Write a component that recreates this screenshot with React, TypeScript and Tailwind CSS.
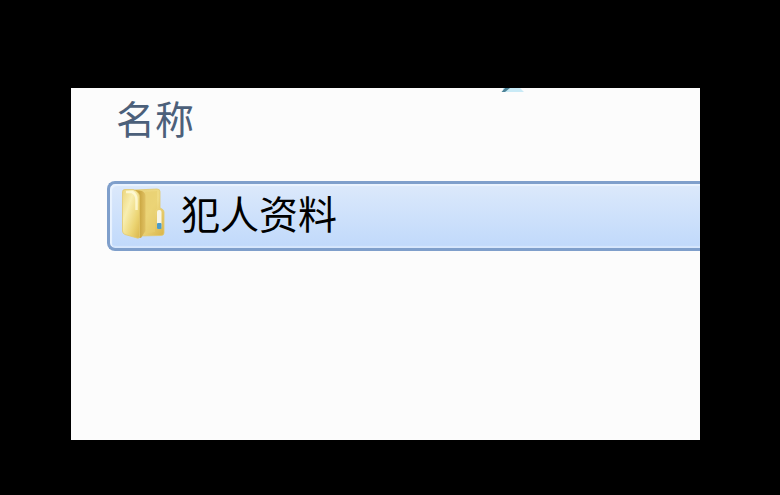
import React, { useState } from "react";

interface Folder {
  id: number;
  name: string;
}

const folders: Folder[] = [{ id: 1, name: "犯人资料" }];

const FolderIcon = () => (
  <svg className="h-14 w-11 shrink-0" viewBox="0 0 44 56" aria-hidden="true">
    <defs>
      <linearGradient id="cover" x1="0" y1="0" x2="1" y2="1">
        <stop offset="0" stopColor="#ecd57c" />
        <stop offset="0.35" stopColor="#f8eeb0" />
        <stop offset="0.7" stopColor="#ecd574" />
        <stop offset="1" stopColor="#dab64d" />
      </linearGradient>
      <linearGradient id="spine" x1="0" y1="0" x2="1" y2="0">
        <stop offset="0" stopColor="#d9b64f" />
        <stop offset="0.5" stopColor="#c9a540" />
        <stop offset="1" stopColor="#e0c163" />
      </linearGradient>
      <linearGradient id="back" x1="0" y1="0" x2="1" y2="1">
        <stop offset="0" stopColor="#ead27a" />
        <stop offset="0.5" stopColor="#efdb83" />
        <stop offset="1" stopColor="#d9b448" />
      </linearGradient>
    </defs>
    <path
      d="M14 2 L36 1 Q39 1 39 3.500 V20 L41 21 Q43 22 43 24 V45 Q43 47.500 40 47.500 L18 48 Z"
      fill="url(#back)"
      stroke="#e2c96f"
      strokeWidth="0.8"
    />
    <path d="M24 4 L36 3 V20 L34 24 V44 L24 46 Z" fill="#e8ce6e" opacity="0.6" />
    <path d="M12 1.500 L21 3 Q24.500 4.500 24.500 8 V43 L20 50 L15 49 Z" fill="url(#spine)" />
    <path
      d="M1.500 3.500 Q1.500 1.500 4 1.500 L12 1.500 Q18.500 4 18.500 9 V48 Q18.500 51 16 50 L4 46.500 Q1.500 45.500 1.500 43 Z"
      fill="url(#cover)"
      stroke="#e3c96e"
      strokeWidth="0.8"
    />
    <path d="M5 4 L11 4 Q15.500 6 15.500 12 V22" fill="none" stroke="#fffbdc" strokeWidth="2.500" opacity="0.8" />
    <rect x="36" y="22" width="4.500" height="19" rx="2" fill="#f7f5e6" />
    <rect x="36" y="35" width="4.500" height="6" rx="1" fill="#4b9bc8" />
  </svg>
);

const SortArrow = () => (
  <svg className="absolute left-[68%] top-0 h-[6px] w-7" viewBox="0 0 28 6" aria-hidden="true">
    <path d="M4 0 H21 L25 4 H4 Z" fill="#c9eaf6" />
    <path d="M6 0 H11 L6 4 H2.500 Z" fill="#4d8397" />
  </svg>
);

const App = () => {
  const [selected, setSelected] = useState<number>(1);

  return (
    <div className="flex min-h-screen bg-black pb-[55px] pl-[71px] pr-20 pt-[88px] font-['Liberation_Sans','Noto_Sans_CJK_SC',sans-serif]">
      <main className="min-w-0 flex-1 overflow-hidden bg-[#fcfcfc]">
        <button className="relative block w-full pb-8 pl-[45px] pt-[5px] text-left text-[39px] leading-[56px] text-[#4c607a]">
          名称
          <SortArrow />
        </button>

        <ul className="ml-9">
          {folders.map((folder) => (
            <li key={folder.id}>
              <button
                onClick={() => setSelected(folder.id)}
                className={`flex h-[70px] w-full items-center gap-4 rounded-l-lg border-y-3 border-l-3 pl-[11px] text-left text-[39px] leading-[56px] text-black ${
                  selected === folder.id
                    ? "border-[#7f9fcb] bg-linear-to-b from-[#dce9fb] to-[#c0d9fb] shadow-[inset_2px_2px_1px_#eaf3fe,inset_0_-2px_1px_#d6e6fc]"
                    : "border-transparent"
                }`}
              >
                <FolderIcon />
                {folder.name}
              </button>
            </li>
          ))}
        </ul>
      </main>
    </div>
  );
};

export default App;
